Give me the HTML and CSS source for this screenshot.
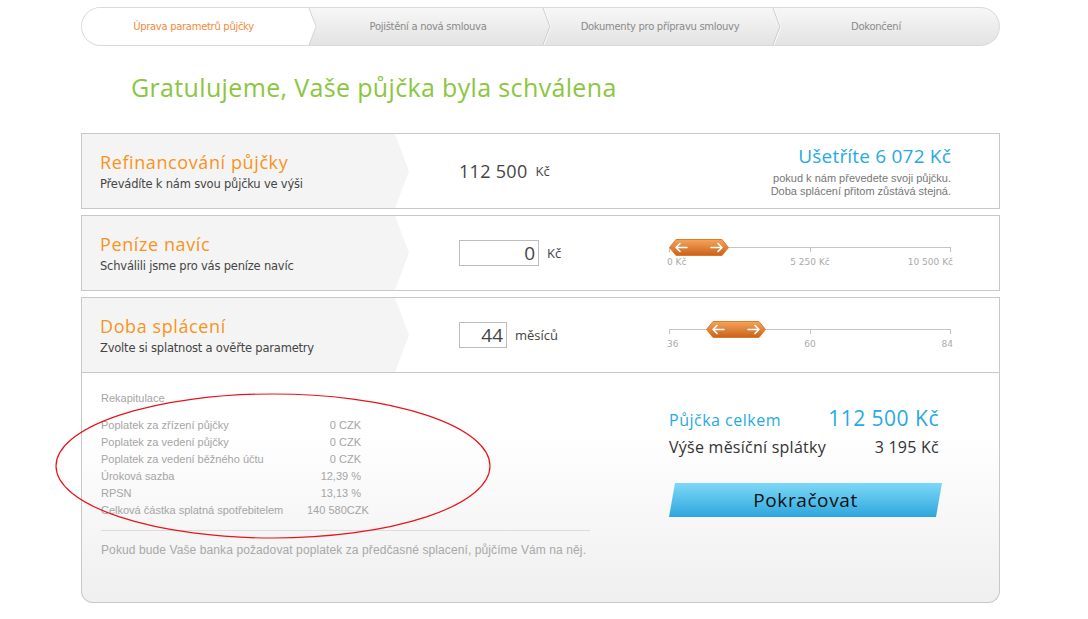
FILE: index.html
```html
<!DOCTYPE html>
<html lang="cs">
<head>
<meta charset="utf-8">
<title>Úprava parametrů půjčky</title>
<link rel="stylesheet" href="styles.css">
</head>
<body>
<div class="page">
  <div class="steps">
    <div class="step active">Úprava parametrů půjčky</div>
    <svg class="divider" viewBox="0 0 12 37" preserveAspectRatio="none"><polygon points="0,0 4,0 11,18.5 4,37 0,37" fill="#fff"/><polyline points="4,0 11,18.5 4,37" fill="none" stroke="#d4d4d4" stroke-width="1"/></svg>
    <div class="step">Pojištění a nová smlouva</div>
    <svg class="divider" viewBox="0 0 12 37" preserveAspectRatio="none"><polyline points="4,0 11,18.5 4,37" fill="none" stroke="#c9c9c9" stroke-width="1"/><polyline points="5,0 12,18.5 5,37" fill="none" stroke="#fafafa" stroke-width="1"/></svg>
    <div class="step">Dokumenty pro přípravu smlouvy</div>
    <svg class="divider" viewBox="0 0 12 37" preserveAspectRatio="none"><polyline points="4,0 11,18.5 4,37" fill="none" stroke="#c9c9c9" stroke-width="1"/><polyline points="5,0 12,18.5 5,37" fill="none" stroke="#fafafa" stroke-width="1"/></svg>
    <div class="step last">Dokončení</div>
  </div>

  <h1 class="title">Gratulujeme, Vaše půjčka byla schválena</h1>

  <div class="panel">
    <div class="panel-label">
      <div class="panel-title">Refinancování půjčky</div>
      <div class="panel-sub">Převádíte k nám svou půjčku ve výši</div>
    </div>
    <div class="panel-mid"><span class="amount">112 500</span><span class="unit">Kč</span></div>
    <div class="panel-right save">
      <div class="save-title">Ušetříte 6 072 Kč</div>
      <div class="save-note">pokud k nám převedete svoji půjčku.</div>
      <div class="save-note">Doba splácení přitom zůstává stejná.</div>
    </div>
  </div>

  <div class="panel">
    <div class="panel-label">
      <div class="panel-title">Peníze navíc</div>
      <div class="panel-sub">Schválili jsme pro vás peníze navíc</div>
    </div>
    <div class="panel-mid"><span class="box box-wide">0</span><span class="unit">Kč</span></div>
    <div class="panel-right">
      <div class="slider">
        <div class="track"><span class="tick"></span><span class="tick"></span><span class="tick"></span></div>
        <svg class="handle" style="left:0px" viewBox="0 0 60 17"><defs><linearGradient id="hg1" x1="0" y1="0" x2="0" y2="1"><stop offset="0" stop-color="#f6a45a"/><stop offset="1" stop-color="#c8621c"/></linearGradient></defs><polygon points="7,0.5 53,0.5 59.5,8.5 53,16.5 7,16.5 0.5,8.5" fill="url(#hg1)" stroke="#e07a2a" stroke-width="1"/><path d="M7 8.5h11M7 8.5l4-4M7 8.5l4 4M53 8.5h-11M53 8.5l-4-4M53 8.5l-4 4" stroke="#fff" stroke-width="1.6" fill="none" stroke-linecap="round"/></svg>
        <div class="ticks-labels"><span>0 Kč</span><span>5 250 Kč</span><span>10 500 Kč</span></div>
      </div>
    </div>
  </div>

  <div class="panel panel-last">
    <div class="panel-label">
      <div class="panel-title">Doba splácení</div>
      <div class="panel-sub">Zvolte si splatnost a ověřte parametry</div>
    </div>
    <div class="panel-mid"><span class="box box-narrow">44</span><span class="unit">měsíců</span></div>
    <div class="panel-right">
      <div class="slider">
        <div class="track"><span class="tick"></span><span class="tick"></span><span class="tick"></span></div>
        <svg class="handle" style="left:37px" viewBox="0 0 60 17"><defs><linearGradient id="hg2" x1="0" y1="0" x2="0" y2="1"><stop offset="0" stop-color="#f6a45a"/><stop offset="1" stop-color="#c8621c"/></linearGradient></defs><polygon points="7,0.5 53,0.5 59.5,8.5 53,16.5 7,16.5 0.5,8.5" fill="url(#hg2)" stroke="#e07a2a" stroke-width="1"/><path d="M7 8.5h11M7 8.5l4-4M7 8.5l4 4M53 8.5h-11M53 8.5l-4-4M53 8.5l-4 4" stroke="#fff" stroke-width="1.6" fill="none" stroke-linecap="round"/></svg>
        <div class="ticks-labels"><span>36</span><span>60</span><span>84</span></div>
      </div>
    </div>
  </div>

  <div class="summary">
    <div class="recap">
      <div class="recap-head">Rekapitulace</div>
      <div class="recap-rows">
        <span>Poplatek za zřízení půjčky</span><span class="val">0 CZK</span>
        <span>Poplatek za vedení půjčky</span><span class="val">0 CZK</span>
        <span>Poplatek za vedení běžného účtu</span><span class="val">0 CZK</span>
        <span>Úroková sazba</span><span class="val">12,39 %</span>
        <span>RPSN</span><span class="val">13,13 %</span>
        <span>Celková částka splatná spotřebitelem</span><span class="val">140 580CZK</span>
      </div>
      <div class="recap-note">Pokud bude Vaše banka požadovat poplatek za předčasné splacení, půjčíme Vám na něj.</div>
    </div>
    <div class="totals">
      <div class="total-row"><span class="total-label">Půjčka celkem</span><span class="total-value">112 500 Kč</span></div>
      <div class="total-row monthly"><span>Výše měsíční splátky</span><span>3 195 Kč</span></div>
      <div class="btn">Pokračovat</div>
    </div>
    <svg class="annot" width="445" height="152" viewBox="0 0 445 152"><ellipse cx="221" cy="77" rx="217" ry="72" fill="none" stroke="#e8141b" stroke-width="1.2"/></svg>
  </div>
</div>
</body>
</html>
```
FILE: styles.css
```css
body {
  margin: 0;
  background: #fff;
  font-family: "Liberation Sans", Arial, sans-serif;
}

.page {
  width: 919px;
  margin-left: 81px;
  padding-top: 7px;
}

.steps {
  box-sizing: border-box;
  height: 39px;
  display: grid;
  grid-template-columns: 223px 12px 222px 12px 218px 12px 1fr;
  border: 1px solid #d9d9d9;
  border-radius: 20px;
  overflow: hidden;
  background: linear-gradient(#f7f7f7, #e3e3e3);
}

.step {
  display: flex;
  align-items: center;
  justify-content: center;
  font-family: "DejaVu Sans", sans-serif;
  font-size: 10px;
  letter-spacing: -0.3px;
  color: #8a8a8a;
}

.step.active {
  background: #fff;
  color: #f5893a;
}

.step.last {
  padding-right: 28px;
}

.divider {
  width: 12px;
  height: 37px;
  display: block;
}

.title {
  margin: 26px 0 31px 50px;
  font-family: "Open Sans", sans-serif;
  font-weight: normal;
  font-size: 25px;
  letter-spacing: 0.35px;
  line-height: 30px;
  color: #8cc63f;
}

.panel {
  box-sizing: border-box;
  height: 76px;
  display: flex;
  align-items: center;
  border: 1px solid #c8c8c8;
  margin-bottom: 6px;
  background: #fff;
}

.panel-last {
  margin-bottom: 0;
}

.panel-label {
  box-sizing: border-box;
  align-self: stretch;
  width: 327px;
  padding-left: 18px;
  background: #f4f4f4;
  clip-path: polygon(0 0, 313px 0, 100% 50%, 313px 100%, 0 100%);
  display: flex;
  flex-direction: column;
  justify-content: center;
}

.panel-title {
  font-family: "Open Sans", sans-serif;
  font-size: 18px;
  letter-spacing: 0.6px;
  line-height: 22px;
  color: #f7941d;
}

.panel-sub {
  margin-top: 3px;
  font-family: "DejaVu Sans", sans-serif;
  font-size: 11.5px;
  line-height: 16px;
  color: #444;
  letter-spacing: -0.2px;
}

.panel-mid {
  margin-left: 50px;
  display: flex;
  align-items: center;
}

.amount {
  font-family: "Open Sans", sans-serif;
  font-size: 18px;
  letter-spacing: 0.3px;
  color: #444;
}

.unit {
  margin-left: 8px;
  font-family: "Open Sans", sans-serif;
  font-size: 13px;
  color: #444;
}

.box {
  box-sizing: border-box;
  height: 26px;
  border: 1px solid #bdbdbd;
  padding-right: 3px;
  text-align: right;
  font-family: "Open Sans", sans-serif;
  font-size: 19px;
  line-height: 24px;
  color: #444;
}

.box-wide {
  width: 80px;
}

.box-narrow {
  width: 48px;
}

.panel-right {
  margin-left: auto;
  margin-right: 48px;
  width: 282px;
}

.save {
  text-align: right;
}

.save-title {
  font-family: "Open Sans", sans-serif;
  font-size: 19px;
  letter-spacing: 0.2px;
  line-height: 24px;
  color: #27aae1;
  margin-bottom: 4px;
}

.save-note {
  font-size: 11px;
  line-height: 13px;
  color: #777;
}

.slider {
  position: relative;
  padding-top: 8px;
}

.track {
  height: 1px;
  background: #c4c4c4;
  display: flex;
  justify-content: space-between;
}

.tick {
  width: 1px;
  height: 5px;
  background: #c4c4c4;
}

.handle {
  position: absolute;
  top: 0;
  width: 60px;
  height: 17px;
}

.ticks-labels {
  display: grid;
  grid-template-columns: 1fr 1fr 1fr;
  margin: 8px -2px 0 -2px;
  font-family: "DejaVu Sans", sans-serif;
  font-size: 9px;
  line-height: 12px;
  color: #aaa;
}

.ticks-labels span:nth-child(2) {
  text-align: center;
}

.ticks-labels span:nth-child(3) {
  text-align: right;
}

.summary {
  position: relative;
  box-sizing: border-box;
  height: 230px;
  display: flex;
  border: 1px solid #c8c8c8;
  border-top: none;
  border-radius: 0 0 12px 12px;
  background: linear-gradient(#ffffff 0%, #ffffff 25%, #efefef 100%);
}

.recap {
  width: 489px;
  padding: 18px 0 0 19px;
  font-size: 11px;
  color: #a5a5a5;
}

.recap-head {
  line-height: 14px;
  margin-bottom: 12px;
}

.recap-rows {
  display: grid;
  grid-template-columns: 206px 54px;
  line-height: 17px;
  white-space: nowrap;
}

.recap-rows .val {
  text-align: right;
}

.recap-note {
  margin-top: 11px;
  padding-top: 12px;
  border-top: 1px solid #dcdcdc;
  font-size: 12px;
  letter-spacing: 0.1px;
  line-height: 15px;
  color: #a8a8a8;
}

.totals {
  margin-left: 79px;
  width: 272px;
  padding-top: 32px;
  font-family: "Open Sans", sans-serif;
}

.total-row {
  display: flex;
  justify-content: space-between;
  align-items: baseline;
}

.total-label {
  font-size: 16px;
  letter-spacing: 0.5px;
  line-height: 26px;
  color: #27aae1;
}

.total-value {
  font-size: 21px;
  letter-spacing: 0.5px;
  line-height: 26px;
  color: #27aae1;
  margin-right: 2px;
}

.monthly {
  margin-top: 3px;
  font-size: 16px;
  letter-spacing: 0.25px;
  line-height: 22px;
  color: #333;
  padding-right: 2px;
}

.btn {
  margin-top: 25px;
  width: 273px;
  height: 34px;
  clip-path: polygon(6px 0, 100% 0, calc(100% - 6px) 100%, 0 100%);
  background: linear-gradient(#7dd8f8, #2ea6dd);
  display: flex;
  align-items: center;
  justify-content: center;
  font-size: 19px;
  letter-spacing: 0.6px;
  color: #111;
}

.annot {
  position: absolute;
  left: -30px;
  top: 16px;
  pointer-events: none;
}
```
